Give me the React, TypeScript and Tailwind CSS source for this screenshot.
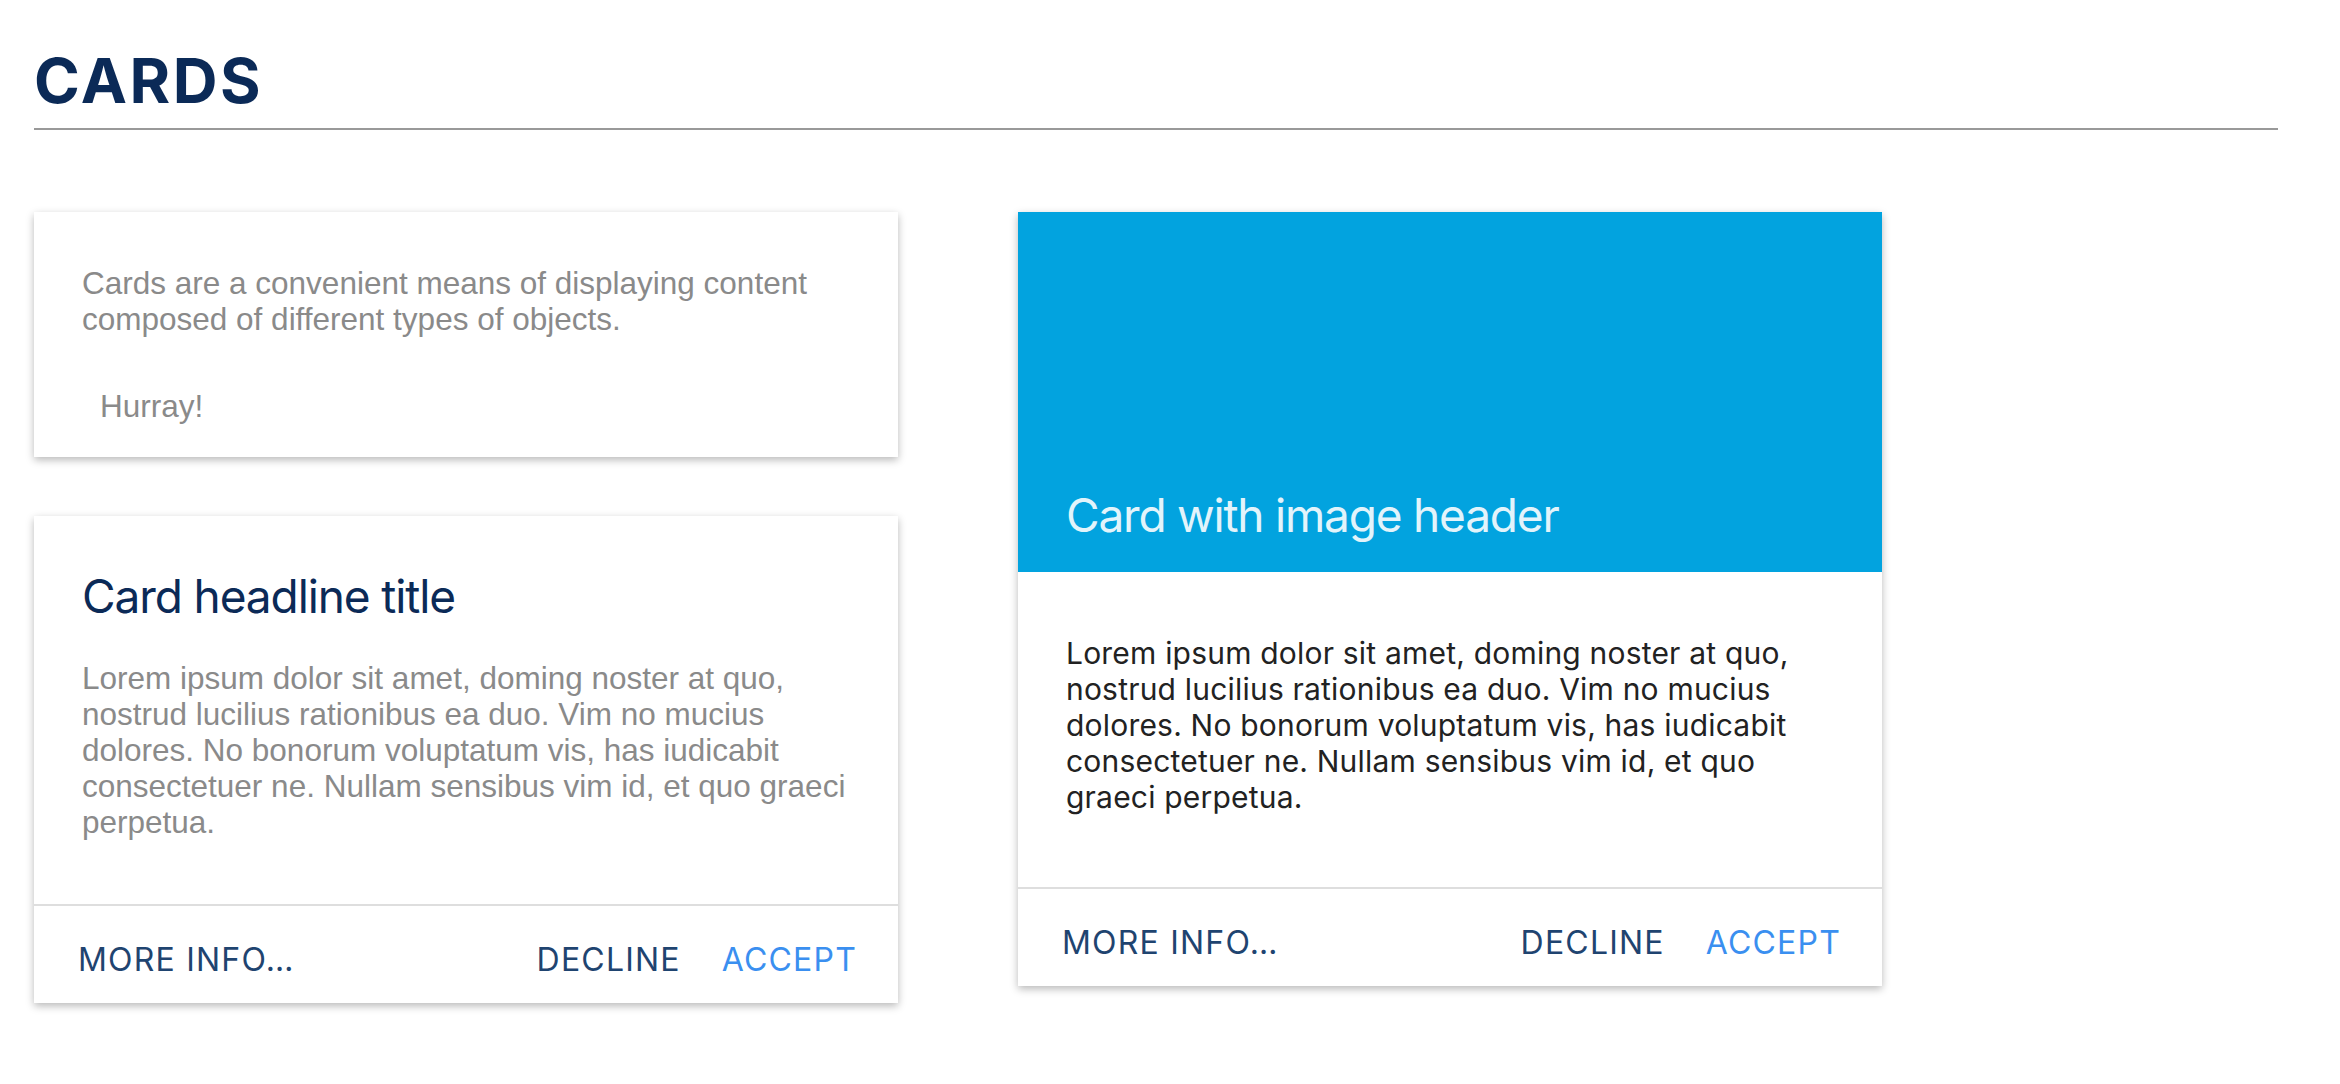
const sans = "font-['Liberation_Sans',Arial,sans-serif]";
const ui = "font-['Inter','Noto_Sans',sans-serif]";

const lorem =
  'Lorem ipsum dolor sit amet, doming noster at quo, nostrud lucilius rationibus ea duo. Vim no mucius dolores. No bonorum voluptatum vis, has iudicabit consectetuer ne. Nullam sensibus vim id, et quo graeci perpetua.';

function CardActions() {
  return (
    <div className={`flex items-center border-t-2 border-[#dedede] pt-[34px] pb-[23px] pl-[44px] pr-[41px] ${ui} text-[32px] leading-[40px] tracking-[1.2px]`}>
      <button className="text-[#1f4470]">MORE INFO…</button>
      <div className="ml-auto flex gap-[41px]">
        <button className="text-[#1f4470]">DECLINE</button>
        <button className="text-[#3a8ff0]">ACCEPT</button>
      </div>
    </div>
  );
}

export default function App() {
  return (
    <div className="min-h-screen bg-white pl-[34px] pr-[62px] pt-[50px]">
      <h1 className={`border-b-2 border-[#999999] pb-[16px] ${ui} text-[62px] leading-[62px] font-bold tracking-[2.5px] text-[#0b2a57]`}>
        CARDS
      </h1>

      <div className="mt-[82px] flex items-start gap-[120px]">
        {/* Left column */}
        <div className="flex w-[864px] flex-col gap-[59px]">
          {/* Simple card */}
          <div className="bg-white px-12 pt-[53px] pb-[33px] shadow-[0_3px_8px_rgba(0,0,0,0.28)]">
            <p className={`${sans} text-[31.5px] leading-[36px] text-[#8a8a8a]`}>
              Cards are a convenient means of displaying content composed of different types of objects.
            </p>
            <button className={`mt-[51px] pl-[18px] ${sans} text-[31.5px] leading-[36px] text-[#8a8a8a]`}>Hurray!</button>
          </div>

          {/* Headline card */}
          <div className="bg-white shadow-[0_3px_8px_rgba(0,0,0,0.28)]">
            <div className="pl-12 pr-[36px] pt-[52px] pb-[64px]">
              <h2 className={`${ui} text-[46px] leading-[56px] tracking-[-1.1px] text-[#0b2a57]`}>Card headline title</h2>
              <p className={`mt-[36px] ${sans} text-[31.5px] leading-[36px] text-[#8a8a8a]`}>{lorem}</p>
            </div>
            <CardActions />
          </div>
        </div>

        {/* Image header card */}
        <div className="w-[864px] bg-white shadow-[0_3px_8px_rgba(0,0,0,0.28)]">
          <div className="flex h-[360px] items-end bg-[#02a3df] px-12 pb-[29px]">
            <h2 className={`${ui} text-[46px] leading-[56px] tracking-[-1.2px] text-[#e2f4fb]`}>Card with image header</h2>
          </div>
          <div className="pl-12 pr-[48px] pt-[63px] pb-[72px]">
            <p className={`${ui} text-[30px] leading-[36px] tracking-[0.2px] text-[#222222]`}>{lorem}</p>
          </div>
          <CardActions />
        </div>
      </div>
    </div>
  );
}
